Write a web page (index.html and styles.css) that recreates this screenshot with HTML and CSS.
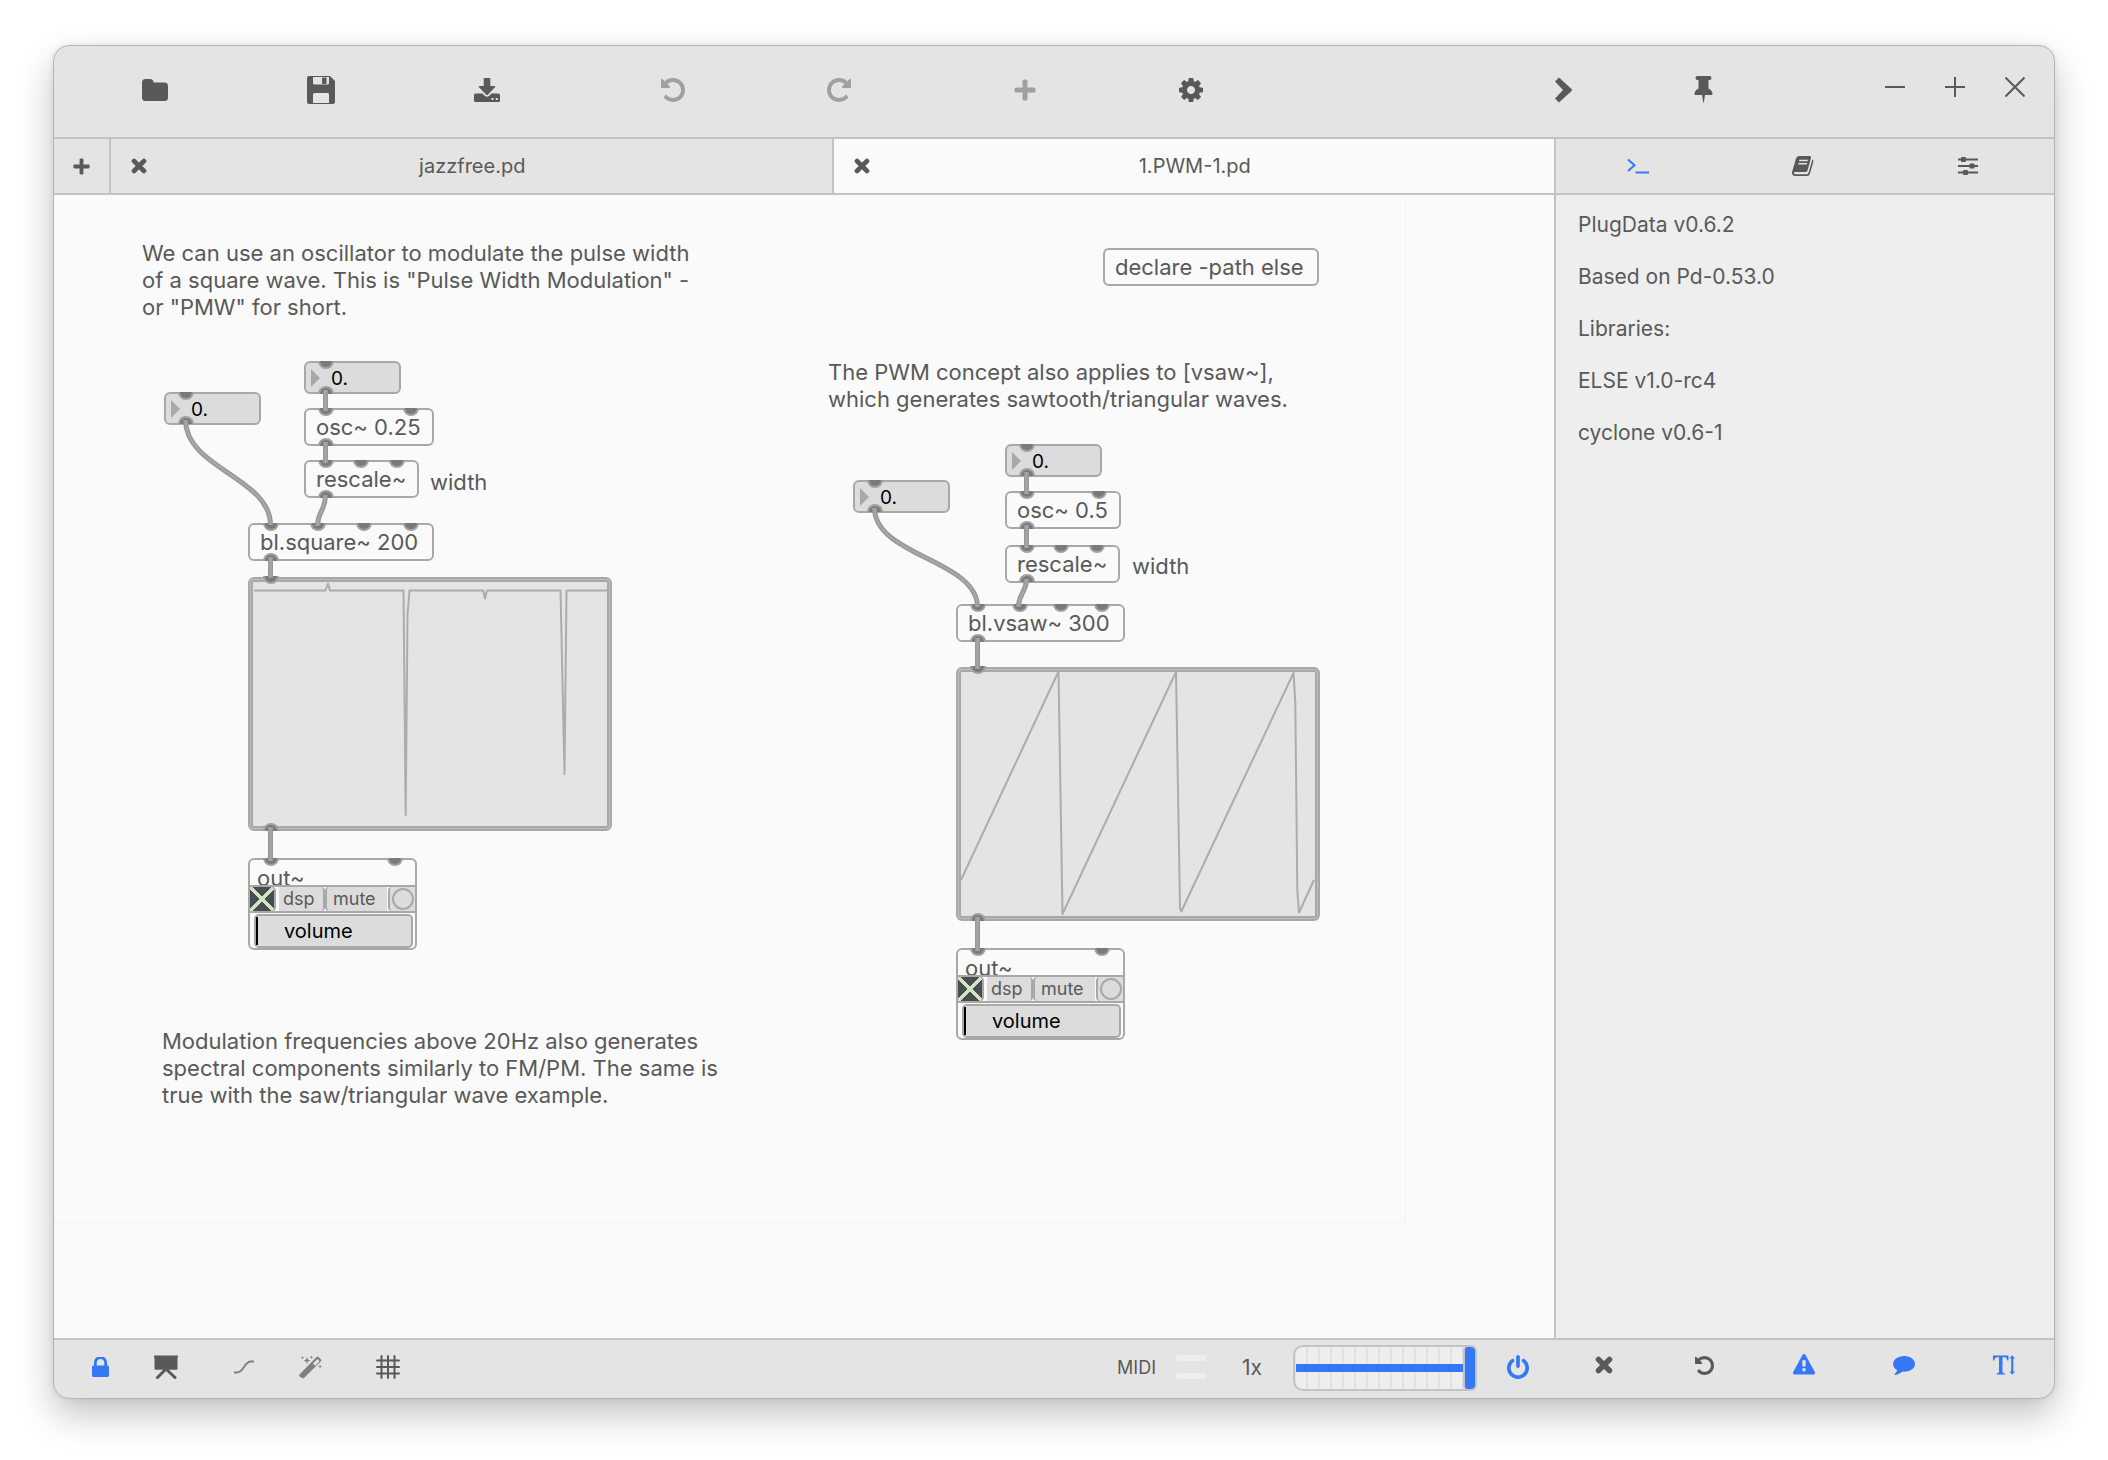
FILE: index.html
```html
<!DOCTYPE html>
<html lang="en">
<head>
<meta charset="utf-8">
<title>PlugData - 1.PWM-1.pd</title>
<link rel="stylesheet" href="styles.css">
</head>
<body>
<svg class="defs" aria-hidden="true">
  <defs>
    <symbol id="i-undo" viewBox="128 128 1536 1536"><path d="M1664 896q0 156-61 298t-164 245-245 164-298 61q-172 0-327-72.500t-264-204.500q-7-10-6.500-22.500t8.500-20.500l137-138q10-9 25-9 16 2 23 12 73 95 179 147t225 52q104 0 198.500-40.500t163.500-109.500 109.500-163.500 40.500-198.500-40.500-198.500-109.500-163.500-163.500-109.500-198.500-40.500q-98 0-188 35.500t-160 101.500l137 138q31 30 14 69-17 40-59 40h-448q-26 0-45-19t-19-45v-448q0-42 40-59 39-17 69 14l130 129q107-101 244.500-156.500t284.500-55.500q156 0 298 61t245 164 164 245 61 298z"/></symbol>
    <symbol id="i-plus" viewBox="0 0 22 22"><path d="M8.500 2a1.500 1.500 0 0 1 1.500-1.500h2A1.500 1.500 0 0 1 13.500 2v6.500H20A1.500 1.500 0 0 1 21.500 10v2a1.500 1.500 0 0 1-1.500 1.500h-6.500V20a1.500 1.500 0 0 1-1.500 1.500h-2A1.500 1.500 0 0 1 8.500 20v-6.500H2A1.500 1.500 0 0 1 .5 12v-2A1.500 1.500 0 0 1 2 8.500h6.500z"/></symbol>
    <symbol id="i-times" viewBox="0 0 18 18"><path d="M3.500 3.500l11 11M14.500 3.500l-11 11" stroke="currentColor" stroke-width="5.500" stroke-linecap="round"/></symbol>
    <g id="inlet"><path d="M-8 0A8 8 0 0 0 8 0z" fill="#a0a0a0"/><path d="M-6 0A6 6 0 0 0 6 0z" fill="#7a7a7a"/></g>
    <g id="outlet"><path d="M-8 0A8 8 0 0 1 8 0z" fill="#a0a0a0"/><path d="M-6 0A6 6 0 0 1 6 0z" fill="#7a7a7a"/></g>
  </defs>
</svg>

<div class="window">
  <header class="toolbar">
    <div class="tool-groups">
      <div class="tool-group">
        <button class="tool" aria-label="Open"><svg width="26" height="22" viewBox="0 0 26 22"><path d="M0 3.500A3.500 3.500 0 0 1 3.500 0H8a3.500 3.500 0 0 1 3.500 3.500H22.500A3.500 3.500 0 0 1 26 7v11.500a3.500 3.500 0 0 1-3.500 3.500h-19A3.500 3.500 0 0 1 0 18.500z"/></svg></button>
        <button class="tool" aria-label="Save"><svg width="28" height="28" viewBox="0 0 28 28"><path fill-rule="evenodd" d="M2 0H23l5 5V26a2 2 0 0 1-2 2H2a2 2 0 0 1-2-2V2A2 2 0 0 1 2 0zM6 1V7A1.500 1.500 0 0 0 7.500 8.500h13A1.500 1.500 0 0 0 22 7V1zM6 27h16v-8.500a1.500 1.500 0 0 0-1.500-1.500h-13A1.500 1.500 0 0 0 6 18.500zM16 1.500h3.500v6.500h-3.500a1 1 0 0 1-1-1v-4.500a1 1 0 0 1 1-1z"/></svg></button>
        <button class="tool" aria-label="Save as"><svg width="26" height="24" viewBox="0 0 26 24"><path fill-rule="evenodd" d="M10.500 0h5a.8.8 0 0 1 .8.8V8H20.500q1.500 0 .5 1.300l-7 7.200q-1 1-2 0l-7-7.200Q4 8 5.500 8H9.700V.8a.8.8 0 0 1 .8-.8zM1.500 15.500H8.500l2.500 2.500q2 1.500 4 0l2.500-2.500h7A1.500 1.500 0 0 1 26 17v5.500a1.500 1.500 0 0 1-1.500 1.500h-23A1.500 1.500 0 0 1 0 22.500V17a1.500 1.500 0 0 1 1.500-1.500zM17.500 20v2h2v-2zM21.800 20v2h2v-2z"/></svg></button>
      </div>
      <div class="tool-group">
        <button class="tool dim" aria-label="Undo"><svg width="24" height="24"><use href="#i-undo"/></svg></button>
        <button class="tool dim" aria-label="Redo"><svg class="mirror" width="24" height="24"><use href="#i-undo"/></svg></button>
      </div>
      <div class="tool-group">
        <button class="tool dim" aria-label="Add object"><svg width="22" height="22"><use href="#i-plus"/></svg></button>
        <button class="tool" aria-label="Settings"><svg width="24" height="24" viewBox="128 128 1536 1536"><path d="M1152 896q0-106-75-181t-181-75-181 75-75 181 75 181 181 75 181-75 75-181zm512-109v222q0 12-8 23t-20 13l-185 28q-19 54-39 91 35 50 107 138 10 12 10 25t-9 23q-27 37-99 108t-94 71q-12 0-26-9l-138-108q-44 23-91 38-16 136-29 186-7 28-36 28h-222q-14 0-24.500-8.500t-11.500-21.500l-28-184q-49-16-90-37l-141 107q-10 9-25 9-14 0-25-11-126-114-165-168-7-10-7-23 0-12 8-23 15-21 51-66.500t54-70.500q-27-50-41-99l-183-27q-13-2-21-12.500t-8-23.500v-222q0-12 8-23t19-13l186-28q14-46 39-92-40-57-107-138-10-12-10-24 0-10 9-23 26-36 98.500-107.500t94.500-71.500q13 0 26 10l138 107q44-23 91-38 16-136 29-186 7-28 36-28h222q14 0 24.500 8.500t11.500 21.500l28 184q49 16 90 37l142-107q9-9 24-9 13 0 25 10 129 119 165 170 7 8 7 22 0 12-8 23-15 21-51 66.500t-54 70.500q26 50 41 98l183 28q13 2 21 12.500t8 23.500z"/></svg></button>
      </div>
    </div>
    <div class="panel-tools">
      <button class="panel-tool" aria-label="Hide sidebar"><svg width="17" height="26" viewBox="0 0 17 26"><path d="M0 4.500L4 .5 16.500 12q1 1 0 2L4 25.500l-4-4 8-8.500z"/></svg></button>
      <button class="panel-tool" aria-label="Pin"><svg width="19" height="27" viewBox="0 0 19 27"><path d="M3.500 0h12a1.500 1.500 0 0 1 0 4H14.500V12.500q4 2 4 5.500a1 1 0 0 1-1 1H11L9.800 26.500h-.6L8 19H1.500a1 1 0 0 1-1-1q0-3.500 4-5.500V4H3.500a1.500 1.500 0 0 1 0-4z"/></svg></button>
    </div>
    <div class="window-tools">
      <button class="window-tool" aria-label="Minimize"><svg width="20" height="20" viewBox="0 0 20 20"><path d="M0 10h20" class="stroke"/></svg></button>
      <button class="window-tool" aria-label="Maximize"><svg width="20" height="20" viewBox="0 0 20 20"><path d="M0 10h20M10 0v20" class="stroke"/></svg></button>
      <button class="window-tool" aria-label="Close"><svg width="20" height="20" viewBox="0 0 20 20"><path d="M.5.5l19 19M19.500.5l-19 19" class="stroke"/></svg></button>
    </div>
  </header>

  <div class="workspace">
    <main class="editor">
      <nav class="tabs">
        <button class="new-tab" aria-label="New patch"><svg width="17" height="17"><use href="#i-plus"/></svg></button>
        <div class="tab"><button class="tab-close" aria-label="Close jazzfree.pd"><svg width="16" height="16"><use href="#i-times"/></svg></button><span class="tab-title">jazzfree.pd</span></div>
        <div class="tab active"><button class="tab-close" aria-label="Close 1.PWM-1.pd"><svg width="16" height="16"><use href="#i-times"/></svg></button><span class="tab-title">1.PWM-1.pd</span></div>
      </nav>

      <section class="canvas" aria-label="Patch">
        <div class="patch-bounds"></div>
        <p class="comment comment-intro">We can use an oscillator to modulate the pulse width<br>of a square wave. This is "Pulse Width Modulation" -<br>or "PMW" for short.</p>
        <p class="comment comment-vsaw">The PWM concept also applies to [vsaw~],<br>which generates sawtooth/triangular waves.</p>
        <p class="comment comment-freq">Modulation frequencies above 20Hz also generates<br>spectral components similarly to FM/PM. The same is<br>true with the saw/triangular wave example.</p>
        <p class="comment comment-width-a">width</p>
        <p class="comment comment-width-b">width</p>

        <div class="node object declare">declare -path else</div>

        <label class="node number square-freq"><input type="text" value="0." aria-label="Square frequency"></label>
        <label class="node number square-rate"><input type="text" value="0." aria-label="Square modulation rate"></label>
        <div class="node object square-osc">osc~ 0.25</div>
        <div class="node object square-rescale">rescale~</div>
        <div class="node object square">bl.square~ 200</div>
        <div class="node scope square-scope"></div>
        <div class="node out square-out">
          <span class="out-name">out~</span>
          <div class="out-row">
            <input class="dsp-toggle" id="dsp-a" type="checkbox" checked><label class="out-label dsp" for="dsp-a">dsp</label>
            <label class="out-label mute" for="mute-a">mute</label><button class="mute-bang" id="mute-a" aria-label="mute"></button>
          </div>
          <div class="volume"><input id="vol-a" type="range" min="0" max="100" value="0"><label for="vol-a">volume</label></div>
        </div>

        <label class="node number vsaw-freq"><input type="text" value="0." aria-label="Vsaw frequency"></label>
        <label class="node number vsaw-rate"><input type="text" value="0." aria-label="Vsaw modulation rate"></label>
        <div class="node object vsaw-osc">osc~ 0.5</div>
        <div class="node object vsaw-rescale">rescale~</div>
        <div class="node object vsaw">bl.vsaw~ 300</div>
        <div class="node scope vsaw-scope"></div>
        <div class="node out vsaw-out">
          <span class="out-name">out~</span>
          <div class="out-row">
            <input class="dsp-toggle" id="dsp-b" type="checkbox" checked><label class="out-label dsp" for="dsp-b">dsp</label>
            <label class="out-label mute" for="mute-b">mute</label><button class="mute-bang" id="mute-b" aria-label="mute"></button>
          </div>
          <div class="volume"><input id="vol-b" type="range" min="0" max="100" value="0"><label for="vol-b">volume</label></div>
        </div>

        <svg class="wires" width="1500" height="1143" viewBox="54 195 1500 1143" aria-hidden="true">
          <g class="wave">
            <path d="M254 590.500H325.500L328 583.500 330 590.500H403.500L405.700 815 407.500 615 409.500 590.500H483.300L485 598.500 487 590.500H560.500L564.500 774 566.500 590.500H607"/>
            <path d="M961 880L1058.500 671.500 1062.500 914 1176 672 1180 908 1181.300 911.500 1293.500 673 1295.300 702 1297.300 890 1299 912.500 1314 880"/>
          </g>
          <g>
            <use href="#inlet" x="186" y="392"/><use href="#inlet" x="326" y="361"/>
            <use href="#inlet" x="326" y="408"/><use href="#inlet" x="411" y="408"/>
            <use href="#inlet" x="326" y="460"/><use href="#inlet" x="361" y="460"/><use href="#inlet" x="397" y="460"/>
            <use href="#inlet" x="271" y="523"/><use href="#inlet" x="318" y="523"/><use href="#inlet" x="364" y="523"/><use href="#inlet" x="411" y="523"/>
            <use href="#inlet" x="271" y="576"/><use href="#inlet" x="271" y="858"/><use href="#inlet" x="395" y="858"/>
            <use href="#inlet" x="875" y="480"/><use href="#inlet" x="1027" y="444"/>
            <use href="#inlet" x="1027" y="491"/><use href="#inlet" x="1099" y="491"/>
            <use href="#inlet" x="1027" y="545"/><use href="#inlet" x="1061" y="545"/><use href="#inlet" x="1097" y="545"/>
            <use href="#inlet" x="978" y="604"/><use href="#inlet" x="1020" y="604"/><use href="#inlet" x="1061" y="604"/><use href="#inlet" x="1102" y="604"/>
            <use href="#inlet" x="978" y="666"/><use href="#inlet" x="978" y="948"/><use href="#inlet" x="1102" y="948"/>
            <use href="#outlet" x="186" y="424"/><use href="#outlet" x="326" y="394"/><use href="#outlet" x="326" y="446"/><use href="#outlet" x="326" y="498"/><use href="#outlet" x="271" y="561"/><use href="#outlet" x="271" y="831"/>
            <use href="#outlet" x="875" y="512"/><use href="#outlet" x="1027" y="476"/><use href="#outlet" x="1027" y="529"/><use href="#outlet" x="1027" y="582"/><use href="#outlet" x="978" y="642"/><use href="#outlet" x="978" y="921"/>
          </g>
          <g class="cable">
            <g id="cables">
              <path d="M185.500 420C185.500 468 270.500 478 270.500 525"/>
              <path d="M325.500 390V411M325.500 442V463M270.500 557V578M270.500 827V861"/>
              <path d="M325.500 495C325.500 511 317.500 511 317.500 526"/>
              <path d="M874.500 508C874.500 556 977.500 560 977.500 607"/>
              <path d="M1026.500 472V494M1026.500 525V548M977.500 638V669M977.500 917V951"/>
              <path d="M1026.500 579C1026.500 593 1018.500 593 1018.500 607"/>
            </g>
          </g>
          <use href="#cables" class="cable-core"/>
        </svg>
      </section>
    </main>

    <aside class="sidebar">
      <nav class="panel-tabs">
        <button class="panel-tab on" aria-label="Console"><svg width="22" height="16" viewBox="0 0 22 16"><path d="M1 1.500l6.500 5.700L1 13M8.500 14.500H22" class="stroke"/></svg></button>
        <button class="panel-tab" aria-label="Documentation"><svg width="22" height="20" viewBox="0 0 22 20"><path fill-rule="evenodd" d="M7 0H17.500q2 0 1.500 2L15.500 14.500q-.5 1.500-2 1.500H3q-1.500.3-1 1.300.3.900 1.500.900H14.500q1.500 0 2-1.500L20 5V3.500q1.800.500 1.300 2.300L18 17.500q-.8 2.500-3 2.500H3.500Q0 20 0 16.500q0-1 .5-2L4 2.500Q4.800 0 7 0zM7.500 3.800L7 5.300h8.500l.5-1.500zM6.700 7l-.5 1.500h8.500l.5-1.500z"/></svg></button>
        <button class="panel-tab" aria-label="Parameters"><svg width="20" height="18" viewBox="0 0 20 18"><path d="M0 2.500h20M0 9h20M0 15.500h20" class="stroke"/><rect x="3" y="0" width="5" height="5" rx="1"/><rect x="11.500" y="6.500" width="5" height="5" rx="1"/><rect x="5" y="13" width="5" height="5" rx="1"/></svg></button>
      </nav>
      <ul class="console">
        <li>PlugData v0.6.2</li>
        <li>Based on Pd-0.53.0</li>
        <li>Libraries:</li>
        <li>ELSE v1.0-rc4</li>
        <li>cyclone v0.6-1</li>
      </ul>
    </aside>
  </div>

  <footer class="statusbar">
    <div class="modes">
      <div class="mode-group">
        <button class="mode on" aria-label="Lock"><svg width="17" height="20" viewBox="320 192 1152 1344"><path d="M640 768h512v-192q0-106-75-181t-181-75-181 75-75 181v192zm832 96v576q0 40-28 68t-68 28h-960q-40 0-68-28t-28-68v-576q0-40 28-68t68-28h32v-192q0-184 132-316t316-132 316 132 132 316v192h32q40 0 68 28t28 68z"/></svg></button>
        <button class="mode" aria-label="Presentation mode"><svg width="24" height="24" viewBox="0 0 24 24"><path d="M0 .5h24v2H23.500V14a.8.8 0 0 1-.8.8H1.300A.8.800 0 0 1 .5 14V2.500H0z"/><path d="M12 14L3.500 22.500M12 14l9 8.500" stroke="currentColor" stroke-width="3" stroke-linecap="round" fill="none"/></svg></button>
      </div>
      <div class="mode-group">
        <button class="mode soft" aria-label="Curved connections"><svg width="20" height="14" viewBox="0 0 20 14"><path d="M0 12.500H3C10 12.500 10 1.500 17 1.500H20" class="stroke"/></svg></button>
        <button class="mode soft" aria-label="Auto patching"><svg width="23" height="24" viewBox="0 0 23 24"><path fill-rule="evenodd" d="M.5 19.500L17.500 2q1-1 2 0l2.500 2.500q.8.800 0 1.800L5 23q-1 .8-2 0L.5 21.300q-.8-.9 0-1.800zM14 8.500l2.300 2.200 4.200-4.500L18.500 4z"/><path d="M8 2l.9 2.600 2.600.9-2.600.9L8 9l-.9-2.600-2.600-.9 2.600-.9zM3.500 1l.5 1.200 1.200.5-1.200.5-.5 1.200L3 3.200l-1.200-.5L3 2.200zM12.500.5l.5 1.200 1.200.5-1.200.5-.5 1.200-.5-1.200-1.200-.5 1.200-.5zM21 9.500l.6 1.400 1.400.6-1.400.6-.6 1.400-.6-1.400-1.400-.6 1.400-.6z"/></svg></button>
      </div>
      <div class="mode-group">
        <button class="mode" aria-label="Grid"><svg width="24" height="24" viewBox="0 0 24 24"><path d="M5.500 1v22M12 1v22M18.500 1v22M1 5.500h22M1 12h22M1 18.500h22" class="stroke round"/></svg></button>
      </div>
    </div>
    <div class="audio">
      <span class="midi">MIDI</span>
      <span class="midi-leds"><i></i><i></i></span>
      <button class="zoom">1x</button>
      <input class="master" type="range" min="0" max="100" value="100" aria-label="Master volume">
      <button class="power on" aria-label="DSP power"><svg width="22" height="24" viewBox="128 0 1536 1664"><path d="M1664 896q0 156-61 298t-164 245-245 164-298 61-298-61-245-164-164-245-61-298q0-182 80.500-343t226.500-270q43-32 95.500-25t83.500 50q32 42 24.500 94.500t-49.500 84.500q-98 74-151.500 181t-53.500 228q0 104 40.500 198.500t109.500 163.500 163.500 109.500 198.500 40.500 198.500-40.500 163.500-109.500 109.500-163.500 40.500-198.500q0-121-53.500-228t-151.500-181q-42-32-49.500-84.500t24.500-94.500q31-43 84-50t95 25q146 109 226.500 270t80.500 343zm-640-768v640q0 52-38 90t-90 38-90-38-38-90v-640q0-52 38-90t90-38 90 38 38 90z"/></svg></button>
    </div>
    <div class="console-tools">
      <button aria-label="Clear console"><svg width="18" height="18"><use href="#i-times"/></svg></button>
      <button aria-label="Restore console"><svg width="19" height="19"><use href="#i-undo"/></svg></button>
      <button class="on" aria-label="Show errors"><svg width="22" height="22" viewBox="0 0 1792 1792"><path d="M1024 1375v-190q0-14-9.500-23.500t-22.500-9.500h-192q-13 0-22.500 9.500t-9.500 23.500v190q0 14 9.500 23.500t22.500 9.500h192q13 0 22.500-9.500t9.500-23.500zm-2-374l18-459q0-12-10-19-13-11-24-11h-220q-11 0-24 11-10 7-10 21l17 457q0 10 10 16.500t24 6.500h185q14 0 23.500-6.500t10.500-16.500zm-14-934l768 1408q35 63-2 126-17 29-46.500 46t-63.500 17h-1536q-34 0-63.500-17t-46.500-46q-37-63-2-126l768-1408q17-31 47-49t65-18 65 18 47 49z"/></svg></button>
      <button class="on" aria-label="Show messages"><svg width="22" height="19" viewBox="0 256 1792 1536"><path d="M1792 896q0 174-120 321.500t-326 233-450 85.500q-70 0-145-8-198 175-460 242-49 14-114 22-17 2-30.500-9t-17.500-29v-1q-3-4-.5-12t2-10 4.500-9.500l6-9 7-8.500 8-9q7-8 31-34.500t34.500-38 31-39.500 32.500-51 27-59 26-76q-157-89-247.500-220t-90.500-281q0-130 71-248.500t191-204.500 286-136.500 348-50.500q244 0 450 85.500t326 233 120 321.500z"/></svg></button>
      <button class="on" aria-label="Autoscroll"><svg width="22" height="20" viewBox="0 0 22 20"><path d="M0 .5H15.500V5.500H14.300Q14 2.500 12 2.300H9.500V17q0 1.200 2.300 1.300V19.500H3.700V18.300Q6 18.200 6 17V2.300H3.500Q1.500 2.500 1.200 5.500H0z"/><path d="M19.200.3L22 3.500H20.300v13H22l-2.800 3.200-2.700-3.200h1.700v-13h-1.700z"/></svg></button>
    </div>
  </footer>
</div>
</body>
</html>
```

FILE: styles.css
```css
:root {
  --bar: #e4e4e4;
  --canvas: #fafafa;
  --panel: #eeeeee;
  --line: #c3c3c3;
  --ink: #595959;
  --outline: #a8a8a8;
  --field: #dcdcdc;
  --accent: #3478f6;
}

* { box-sizing: border-box; }

body {
  margin: 0;
  padding: 45px 53px 61px;
  min-height: 100vh;
  display: flex;
  background: #fff;
  color: var(--ink);
  font-family: Inter, "Liberation Sans", sans-serif;
  font-size: 20px;
  font-optical-sizing: none;
}

button {
  display: flex;
  align-items: center;
  justify-content: center;
  padding: 0;
  border: 0;
  background: none;
  color: inherit;
  font: inherit;
}

svg { display: block; fill: currentColor; }
.defs { position: absolute; width: 0; height: 0; }
.stroke { fill: none; stroke: currentColor; stroke-width: 2; }
.round { stroke-linecap: round; }
.mirror { transform: scaleX(-1); }
.on { color: var(--accent); }
.dim { color: #a0a0a0; }
.soft { color: #808080; }

.window {
  flex: 1;
  display: flex;
  flex-direction: column;
  overflow: hidden;
  border: 1px solid #b4b4b4;
  border-radius: 16px;
  background: var(--bar);
  box-shadow: 0 16px 36px rgba(0, 0, 0, .24), 0 0 6px rgba(0, 0, 0, .08);
}

/* Title bar */
.toolbar {
  display: flex;
  height: 93px;
  padding: 0 9px 4px 18px;
  border-bottom: 2px solid var(--line);
}
.tool-groups { display: flex; gap: 20px; }
.tool-group { display: flex; }
.tool { width: 166px; }
.panel-tools { display: flex; margin-left: auto; margin-right: 92px; }
.panel-tool { width: 140px; }
.window-tools { display: flex; padding-bottom: 5px; }
.window-tool { width: 60px; }

/* Work area */
.workspace { flex: 1; display: flex; }
.editor { flex: 1; display: flex; flex-direction: column; }

.tabs {
  display: flex;
  height: 56px;
  border-bottom: 2px solid var(--line);
}
.new-tab { width: 55px; }
.tab {
  flex: 1;
  display: flex;
  align-items: center;
  padding: 0 18px;
  border-left: 2px solid var(--line);
}
.tab.active { background: var(--canvas); }
.tab-close { width: 20px; height: 20px; }
.tab-title { flex: 1; margin-right: 18px; text-align: center; }

/* Patch canvas: objects sit at free coordinates */
.canvas {
  flex: 1;
  position: relative;
  overflow: hidden;
  background: var(--canvas);
  font-size: 22px;
  line-height: 27px;
}
.patch-bounds {
  position: absolute;
  left: 0;
  top: 0;
  width: 1352px;
  height: 1028px;
  border: solid #f3f3f3;
  border-width: 0 1px 1px 0;
}
.wires { position: absolute; left: 0; top: 0; pointer-events: none; }
.wave path { fill: none; stroke: #acacac; stroke-width: 2; stroke-linejoin: round; }
.cable { fill: none; stroke: #989898; stroke-width: 5; }
.cable-core { fill: none; stroke: #a8a8a8; stroke-width: 2; }

.comment { position: absolute; margin: 0; white-space: nowrap; }
.comment-intro { left: 88px; top: 45px; }
.comment-vsaw { left: 774px; top: 164px; }
.comment-freq { left: 108px; top: 833px; }
.comment-width-a { left: 376px; top: 274px; }
.comment-width-b { left: 1078px; top: 358px; }

.node {
  position: absolute;
  border: 2px solid var(--outline);
  border-radius: 6px;
  white-space: nowrap;
}
.object { height: 38px; padding: 4px 10px; }
.declare { left: 1049px; top: 53px; width: 216px; }
.square-osc { left: 250px; top: 213px; width: 130px; }
.square-rescale { left: 250px; top: 265px; width: 115px; }
.square { left: 194px; top: 328px; width: 186px; }
.vsaw-osc { left: 951px; top: 296px; width: 116px; }
.vsaw-rescale { left: 951px; top: 350px; width: 115px; }
.vsaw { left: 902px; top: 409px; width: 169px; }

.number {
  display: flex;
  align-items: center;
  width: 97px;
  height: 33px;
  padding-left: 5px;
  background: var(--field);
}
.number::before {
  content: "";
  border: solid transparent;
  border-width: 9px 0 9px 9px;
  border-left-color: var(--outline);
}
.number input {
  width: 60px;
  margin-left: 11px;
  padding: 2px 0 0;
  border: 0;
  background: none;
  color: #000;
  font: inherit;
  font-size: 19px;
}
.square-freq { left: 110px; top: 197px; }
.square-rate { left: 250px; top: 166px; }
.vsaw-freq { left: 799px; top: 285px; }
.vsaw-rate { left: 951px; top: 249px; }

.scope {
  width: 364px;
  height: 254px;
  background: var(--bar);
  box-shadow: inset 0 0 0 1px #bebebe, inset 0 0 0 3px var(--outline);
}
.square-scope { left: 194px; top: 382px; }
.vsaw-scope { left: 902px; top: 472px; }

.out {
  display: flex;
  flex-direction: column;
  width: 169px;
  height: 92px;
}
.square-out { left: 194px; top: 663px; }
.vsaw-out { left: 902px; top: 753px; }
.out-name { height: 25px; padding: 5px 7px 0; }
.out-row {
  display: flex;
  height: 28px;
  border: solid var(--outline);
  border-width: 2px 0;
  background: var(--canvas);
}
.dsp-toggle {
  appearance: none;
  width: 26px;
  margin: 0;
  border-right: 2px solid var(--outline);
  border-radius: 0 4px 4px 0;
  background:
    linear-gradient(45deg, transparent calc(50% - 2px), #cfe5c3 0 calc(50% + 2px), transparent 0),
    linear-gradient(-45deg, transparent calc(50% - 2px), #cfe5c3 0 calc(50% + 2px), transparent 0),
    #494d50;
}
.out-label { padding: 0 4px; background: var(--field); font-size: 18px; line-height: 24px; }
.dsp { width: 46px; margin-left: 3px; border-right: 2px solid var(--outline); border-radius: 0 4px 4px 0; }
.mute { width: 62px; padding-left: 6px; border-left: 2px solid var(--outline); border-radius: 4px 0 0 4px; }
.mute-bang {
  width: 27px;
  margin-left: auto;
  border-left: 2px solid var(--outline);
  border-radius: 4px 0 0 4px;
  background: var(--field);
}
.mute-bang::before {
  content: "";
  width: 18px;
  height: 18px;
  border: 2px solid var(--outline);
  border-radius: 50%;
}
.volume {
  position: relative;
  flex: 1;
  margin: 1px 2px 0 4px;
  border: 2px solid var(--outline);
  border-radius: 5px;
  background: var(--field);
}
.volume input {
  appearance: none;
  display: block;
  width: 100%;
  height: 100%;
  margin: 0;
  background: none;
}
.volume input::-webkit-slider-thumb {
  appearance: none;
  width: 2px;
  height: 28px;
  background: #000;
}
.volume label { position: absolute; left: 28px; top: 2px; color: #000; font-size: 20px; }

/* Sidebar */
.sidebar {
  display: flex;
  flex-direction: column;
  width: 500px;
  border-left: 2px solid var(--line);
  background: var(--panel);
}
.panel-tabs {
  display: flex;
  height: 56px;
  padding-right: 4px;
  border-bottom: 2px solid var(--line);
  background: var(--bar);
}
.panel-tab { flex: 1; }
.console {
  margin: 0;
  padding: 4px 22px;
  list-style: none;
  font-size: 21px;
  line-height: 52px;
}

/* Status bar */
.statusbar {
  display: flex;
  height: 60px;
  border-top: 2px solid var(--line);
}
.modes { display: flex; gap: 12px; padding: 0 0 4px 13px; }
.mode-group { display: flex; }
.mode { width: 66px; }
.audio { display: flex; align-items: center; margin-left: auto; padding-bottom: 4px; }
.midi { font-size: 18px; }
.midi-leds { display: grid; gap: 12px; margin: 0 34px 0 20px; }
.midi-leds i { width: 30px; height: 6px; border-radius: 2px; background: var(--panel); }
.zoom { width: 24px; font-size: 21px; }
.master {
  appearance: none;
  width: 184px;
  height: 46px;
  margin: 2px 5px 0 29px;
  border: 2px solid var(--line);
  border-radius: 10px 6px 6px 10px;
  background:
    linear-gradient(var(--accent), var(--accent)) 1px 50% / 168px 8px no-repeat,
    repeating-linear-gradient(90deg, transparent 0 10px, #e2e2e2 10px 12px) 1px 0,
    var(--panel);
}
.master::-webkit-slider-thumb {
  appearance: none;
  width: 12px;
  height: 42px;
  border-left: 2px solid var(--line);
  border-radius: 4px;
  background: var(--accent);
}
.power { width: 72px; }
.console-tools { display: flex; width: 500px; padding-bottom: 8px; }
.console-tools button { flex: 1; }
```
